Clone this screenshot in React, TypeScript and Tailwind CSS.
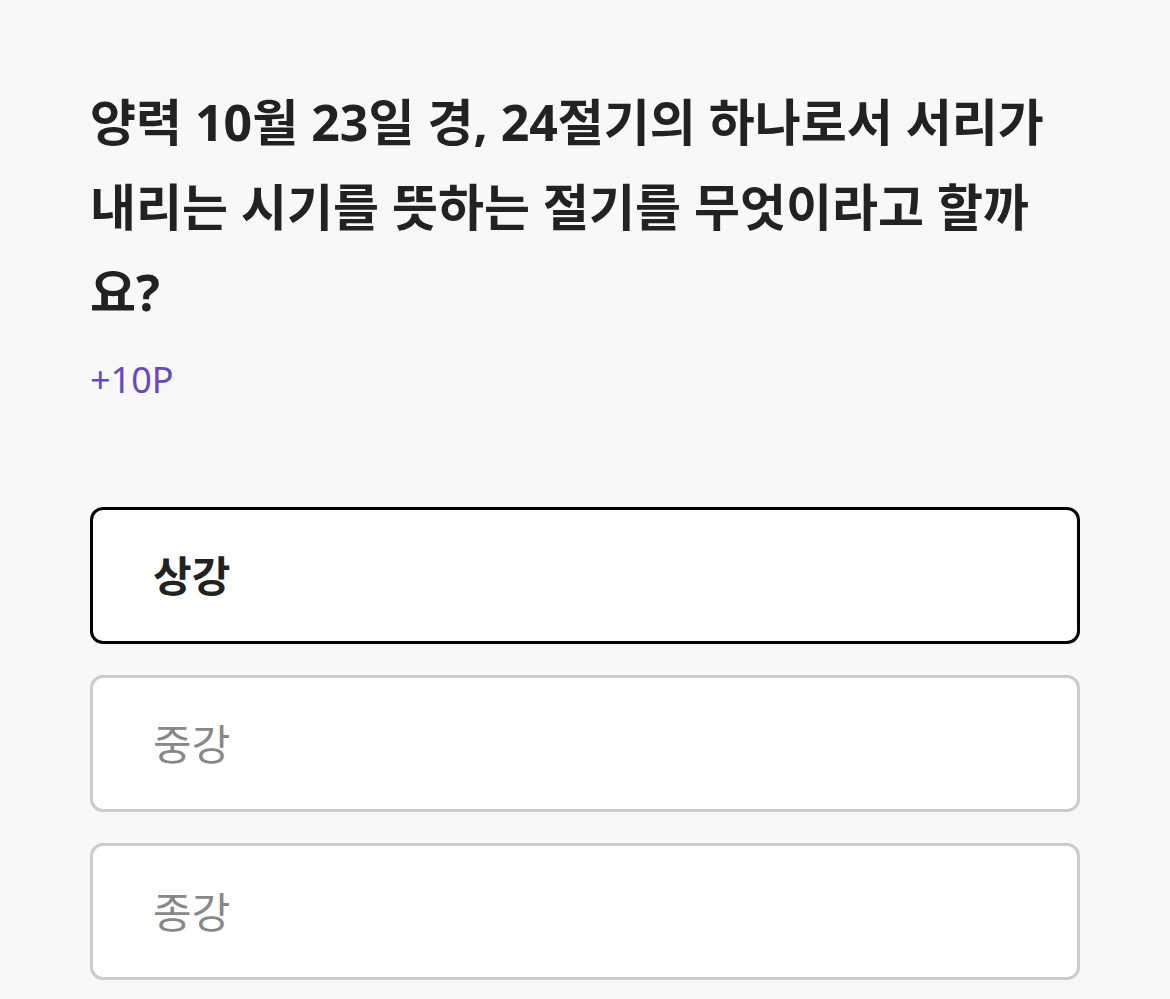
import React from "react";

const options = [
  { label: "상강", selected: true },
  { label: "중강", selected: false },
  { label: "종강", selected: false },
];

const App = () => {
  return (
    <div
      className="min-h-[999px] bg-[#f8f8f8] px-[90px] pt-[80px]"
      style={{ fontFamily: '"Noto Sans", "Noto Sans CJK KR", sans-serif' }}
    >
      <h1 className="text-[50px] leading-[85px] font-bold text-[#222222] break-all">
        양력 10월 23일 경, 24절기의 하나로서 서리가 내리는 시기를 뜻하는 절기를 무엇이라고 할까요?
      </h1>
      <p className="mt-[21px] text-[36px] leading-[48px] text-[#6549c0]">+10P</p>
      <div className="mt-[103px] flex flex-col gap-[31px]">
        {options.map((o) => (
          <div
            key={o.label}
            className={
              o.selected
                ? "h-[137px] rounded-[13px] border-[3px] border-black bg-white flex items-center pl-[60px] text-[42px] font-bold text-[#222222]"
                : "h-[137px] rounded-[13px] border-[3px] border-[#cccccc] bg-white flex items-center pl-[60px] text-[42px] text-[#888888]"
            }
          >
            {o.label}
          </div>
        ))}
      </div>
    </div>
  );
};

export default App;
